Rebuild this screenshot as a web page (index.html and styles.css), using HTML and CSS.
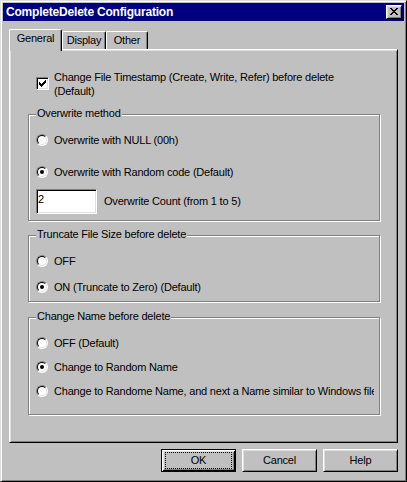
FILE: index.html
```html
<!DOCTYPE html>
<html>
<head>
<meta charset="utf-8">
<title>CompleteDelete Configuration</title>
<link rel="stylesheet" href="styles.css">
</head>
<body>
<div class="window">
  <div class="titlebar">
    <span class="title">CompleteDelete Configuration</span>
    <span class="close">
      <svg class="close-glyph" width="8" height="7" viewBox="0 0 8 7" shape-rendering="crispEdges"><path fill="#000" d="M0 0h2v1H0zM6 0h2v1H6zM1 1h2v1H1zM5 1h2v1H5zM2 2h4v1H2zM3 3h2v1H3zM2 4h4v1H2zM1 5h2v1H1zM5 5h2v1H5zM0 6h2v1H0zM6 6h2v1H6z"/></svg>
    </span>
  </div>

  <div class="tabs">
    <div class="tab tab-active tab-general">General</div>
    <div class="tab tab-display">Display</div>
    <div class="tab tab-other">Other</div>
  </div>

  <div class="panel">
    <div class="check-row">
      <span class="checkbox">
        <svg class="check-glyph" width="7" height="7" viewBox="0 0 7 7" shape-rendering="crispEdges"><path fill="#000" d="M6 0h1v1H6zM5 1h2v1H5zM0 2h1v1H0zM4 2h3v1H4zM0 3h2v1H0zM3 3h3v1H3zM0 4h5v1H0zM1 5h3v1H1zM2 6h1v1H2z"/></svg>
      </span>
      <span class="check-label">Change File Timestamp (Create, Write, Refer) before delete<br>(Default)</span>
    </div>

    <div class="group group-overwrite">
      <span class="legend">Overwrite method</span>
      <div class="opt"><span class="radio"></span><span class="opt-text">Overwrite with NULL (00h)</span></div>
      <div class="opt opt-gap-20"><span class="radio radio-on"></span><span class="opt-text">Overwrite with Random code (Default)</span></div>
      <div class="edit-row"><span class="edit">2</span><span class="opt-text">Overwrite Count (from 1 to 5)</span></div>
    </div>

    <div class="group group-truncate">
      <span class="legend">Truncate File Size before delete</span>
      <div class="opt"><span class="radio"></span><span class="opt-text">OFF</span></div>
      <div class="opt opt-gap-14"><span class="radio radio-on"></span><span class="opt-text">ON (Truncate to Zero) (Default)</span></div>
    </div>

    <div class="group group-name">
      <span class="legend">Change Name before delete</span>
      <div class="opt"><span class="radio"></span><span class="opt-text">OFF (Default)</span></div>
      <div class="opt opt-gap-12"><span class="radio radio-on"></span><span class="opt-text">Change to Random Name</span></div>
      <div class="opt opt-gap-12"><span class="radio"></span><span class="opt-text opt-clip">Change to Randome Name, and next a Name similar to Windows file</span></div>
    </div>
  </div>

  <div class="buttons">
    <button class="btn btn-default"><span class="focus">OK</span></button>
    <button class="btn"><span class="btn-label">Cancel</span></button>
    <button class="btn"><span class="btn-label">Help</span></button>
  </div>
</div>
</body>
</html>
```

FILE: styles.css
```css
html, body {
  margin: 0;
  padding: 0;
  background: #c0c0c0;
}

body {
  font-family: "Liberation Sans", Arial, sans-serif;
  font-size: 11px;
  letter-spacing: -0.2px;
  color: #000;
}

.window {
  width: 407px;
  height: 482px;
  box-sizing: border-box;
  border: 1px solid;
  border-color: #dfdfdf #000 #000 #dfdfdf;
  box-shadow: inset 1px 1px 0 #fff, inset -1px -1px 0 #808080;
  padding: 2px;
  background: #c0c0c0;
  display: flex;
  flex-direction: column;
}

/* Title bar */
.titlebar {
  height: 18px;
  background: #000080;
  display: flex;
  align-items: center;
  justify-content: space-between;
  padding: 0 2px 0 3px;
  flex-shrink: 0;
}

.title {
  color: #fff;
  font-weight: bold;
  font-size: 12px;
  letter-spacing: -0.2px;
  line-height: 14px;
  white-space: nowrap;
}

.close {
  width: 16px;
  height: 14px;
  box-sizing: border-box;
  border: 1px solid;
  border-color: #fff #000 #000 #fff;
  box-shadow: inset 1px 1px 0 #dfdfdf, inset -1px -1px 0 #808080;
  background: #c0c0c0;
  display: flex;
  align-items: flex-start;
  justify-content: flex-start;
}

.close-glyph {
  display: block;
  margin: 2px 0 0 3px;
}

/* Tabs */
.tabs {
  display: flex;
  align-items: flex-end;
  height: 20px;
  margin: 8px 0 0 6px;
  position: relative;
  z-index: 2;
}

.tab {
  box-sizing: border-box;
  height: 18px;
  border-top: 1px solid #fff;
  border-left: 1px solid #fff;
  border-right: 1px solid #000;
  border-top-left-radius: 2px;
  border-top-right-radius: 2px;
  box-shadow: inset -1px 0 0 #808080;
  background: #c0c0c0;
  display: flex;
  justify-content: center;
  align-items: flex-start;
  padding-top: 2px;
  line-height: 13px;
  white-space: nowrap;
}

.tab-active {
  height: 22px;
  margin-bottom: -2px;
  padding-top: 2px;
}

.tab-general { width: 53px; }
.tab-display { width: 44px; }
.tab-other { width: 42px; }

/* Panel */
.panel {
  margin-left: 6px;
  width: 389px;
  height: 394px;
  box-sizing: border-box;
  border: 1px solid;
  border-color: #fff #000 #000 #fff;
  box-shadow: inset 1px 1px 0 #dfdfdf, inset -1px -1px 0 #808080;
  display: flex;
  flex-direction: column;
  flex-shrink: 0;
}

.check-row {
  display: flex;
  align-items: flex-start;
  margin: 20px 0 0 26px;
  height: 28px;
}

.checkbox {
  width: 13px;
  height: 13px;
  box-sizing: border-box;
  border: 1px solid;
  border-color: #808080 #fff #fff #808080;
  box-shadow: inset 1px 1px 0 #000, inset -1px -1px 0 #dfdfdf;
  background: #fff;
  margin-top: 7px;
  flex-shrink: 0;
}

.check-glyph {
  display: block;
  margin: 2px 0 0 2px;
}

.check-label {
  margin-left: 5px;
  line-height: 14px;
}

/* Group boxes */
.group {
  position: relative;
  margin-left: 18px;
  width: 352px;
  box-sizing: border-box;
  border: 1px solid #808080;
  box-shadow: 1px 1px 0 #fff, inset 1px 1px 0 #fff;
  padding: 19px 0 0 7px;
  display: flex;
  flex-direction: column;
}

.group-overwrite { margin-top: 16px; height: 107px; }
.group-truncate { margin-top: 14px; height: 67px; }
.group-name { margin-top: 15px; height: 98px; }

.legend {
  position: absolute;
  top: -8px;
  left: 7px;
  padding: 0 1px;
  background: #c0c0c0;
  line-height: 13px;
  white-space: nowrap;
}

.opt {
  display: flex;
  align-items: center;
  height: 12px;
  gap: 6px;
}

.opt-gap-20 { margin-top: 20px; }
.opt-gap-14 { margin-top: 14px; }
.opt-gap-12 { margin-top: 12px; }

.opt-text {
  line-height: 13px;
  white-space: nowrap;
}

.opt-clip {
  width: 320px;
  overflow: hidden;
}

.radio {
  position: relative;
  width: 12px;
  height: 12px;
  box-sizing: border-box;
  border-radius: 50%;
  border: 1px solid;
  border-color: #808080 #fff #fff #808080;
  background: #fff;
  flex-shrink: 0;
}

.radio::before {
  content: "";
  position: absolute;
  left: 0;
  top: 0;
  width: 10px;
  height: 10px;
  box-sizing: border-box;
  border-radius: 50%;
  border: 1px solid;
  border-color: #000 #dfdfdf #dfdfdf #000;
}

.radio-on::after {
  content: "";
  position: absolute;
  left: 3px;
  top: 3px;
  width: 4px;
  height: 4px;
  border-radius: 50%;
  background: #000;
}

.edit-row {
  display: flex;
  align-items: center;
  gap: 7px;
  margin-top: 11px;
}

.edit {
  width: 61px;
  height: 25px;
  box-sizing: border-box;
  border: 1px solid;
  border-color: #808080 #fff #fff #808080;
  box-shadow: inset 1px 1px 0 #000, inset -1px -1px 0 #dfdfdf;
  background: #fff;
  padding: 3px 0 0 1px;
  line-height: 13px;
  flex-shrink: 0;
}

/* Buttons */
.buttons {
  display: flex;
  justify-content: flex-end;
  gap: 6px;
  margin: 6px 6px 0 0;
}

.btn {
  width: 75px;
  height: 23px;
  box-sizing: border-box;
  border: 1px solid;
  border-color: #fff #000 #000 #fff;
  box-shadow: inset 1px 1px 0 #dfdfdf, inset -1px -1px 0 #808080;
  background: #c0c0c0;
  padding: 0;
  margin: 0;
  font: inherit;
  letter-spacing: inherit;
  color: #000;
  display: flex;
  align-items: center;
  justify-content: center;
}

.btn-default {
  border: 1px solid #000;
  box-shadow: inset 1px 1px 0 #fff, inset -1px -1px 0 #000, inset 2px 2px 0 #dfdfdf, inset -2px -2px 0 #808080;
}

.focus {
  width: 67px;
  height: 17px;
  box-sizing: border-box;
  border: 1px dotted #000;
  display: flex;
  align-items: center;
  justify-content: center;
  line-height: 13px;
}

.btn-label {
  line-height: 13px;
}
```
